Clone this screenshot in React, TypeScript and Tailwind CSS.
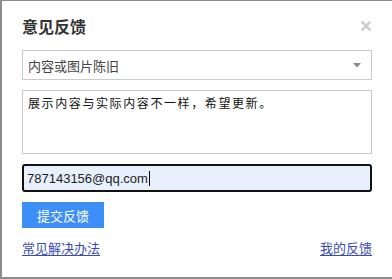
const cjk = "font-['Noto_Sans_CJK_SC','Microsoft_YaHei',sans-serif]";

function CloseIcon() {
  return (
    <svg width="10" height="10" viewBox="0 0 10 10" aria-hidden>
      <path d="M1.5 1.5 L8.5 8.5 M8.5 1.5 L1.5 8.5" stroke="#cfcfcf" strokeWidth="2.6" strokeLinecap="square" />
    </svg>
  );
}

export default function App() {
  return (
    <div className="h-[279px] w-[392px] overflow-hidden border-t border-b-2 border-l-2 border-[#8c8c8c] bg-white">
      <div className="flex flex-col px-5">
        {/* Header */}
        <div className="flex h-[49px] items-center justify-between">
          <h2 className={`${cjk} text-[16px] font-bold leading-none text-[#333]`}>意见反馈</h2>
          <button className="mr-[1px] flex h-[10px] w-[10px] items-center justify-center">
            <CloseIcon />
          </button>
        </div>

        {/* Category select */}
        <div className="flex h-[30px] items-center justify-between border border-[#cbcbcb] pl-[5px] pr-[10px]">
          <span className={`${cjk} text-[13px] leading-none text-[#444]`}>内容或图片陈旧</span>
          <svg width="8" height="5" viewBox="0 0 8 5" aria-hidden>
            <path d="M0 0 H8 L4 4.5 Z" fill="#8a8a8a" />
          </svg>
        </div>

        {/* Description */}
        <div className="mt-[10px] h-[64px] border border-[#cbcbcb] px-[5px] pt-[4px]">
          <p className={`${cjk} text-[12px] leading-[16px] tracking-[1.6px] text-[#111]`}>
            展示内容与实际内容不一样，希望更新。
          </p>
        </div>

        {/* Email */}
        <div className="mt-[10px] flex h-[28px] items-center rounded-[3px] border-2 border-[#111] bg-[#e8f0fe] pl-[3px]">
          <span className="font-['Liberation_Sans',Arial,sans-serif] text-[13px] leading-none text-[#222]">
            787143156@qq.com
          </span>
          <span className="ml-[1px] h-[15px] w-px bg-black" />
        </div>

        {/* Submit */}
        <button
          className={`${cjk} mt-[10px] flex h-[26px] w-[82px] items-center justify-center bg-[#3d8ef7] text-[13px] leading-none text-white`}
        >
          提交反馈
        </button>

        {/* Links */}
        <div className={`${cjk} mt-[12px] flex items-center justify-between text-[13px] leading-[16px] text-[#3a4cb4]`}>
          <a className="underline underline-offset-[2px]">常见解决办法</a>
          <a className="underline underline-offset-[2px]">我的反馈</a>
        </div>
      </div>
    </div>
  );
}
